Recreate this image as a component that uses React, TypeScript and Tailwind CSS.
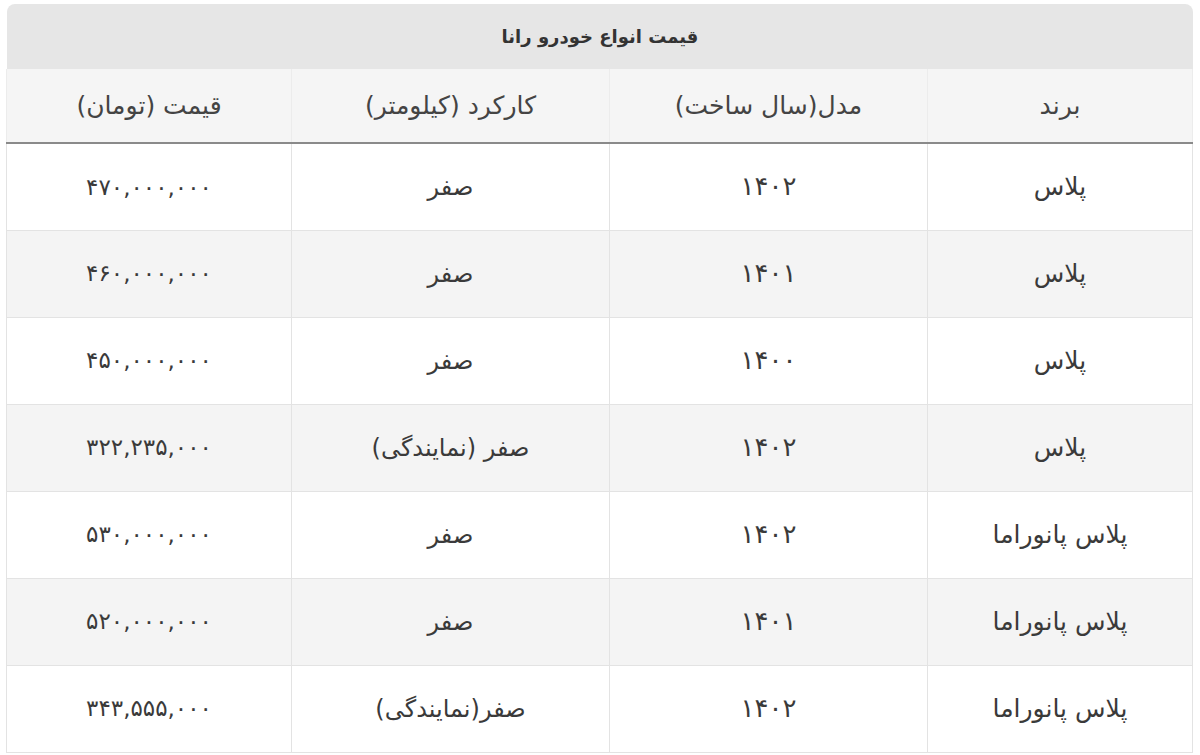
import React from "react";

const rows = [
  ["پلاس", "۱۴۰۲", "صفر", "۴۷۰,۰۰۰,۰۰۰"],
  ["پلاس", "۱۴۰۱", "صفر", "۴۶۰,۰۰۰,۰۰۰"],
  ["پلاس", "۱۴۰۰", "صفر", "۴۵۰,۰۰۰,۰۰۰"],
  ["پلاس", "۱۴۰۲", "صفر (نمایندگی)", "۳۲۲,۲۳۵,۰۰۰"],
  ["پلاس پانوراما", "۱۴۰۲", "صفر", "۵۳۰,۰۰۰,۰۰۰"],
  ["پلاس پانوراما", "۱۴۰۱", "صفر", "۵۲۰,۰۰۰,۰۰۰"],
  ["پلاس پانوراما", "۱۴۰۲", "صفر(نمایندگی)", "۳۴۳,۵۵۵,۰۰۰"],
];

const sizes = ["text-[25px]", "text-[26px]", "text-[24px]", "text-[23px]"];

export default function App() {
  return (
    <div
      className="w-[1200px] h-[755px] bg-white overflow-hidden pt-[4px] px-[7px]"
      style={{ fontFamily: '"DejaVu Sans", "Noto Sans", sans-serif' }}
      dir="rtl"
    >
      <div className="w-[1186px] rounded-t-[8px] bg-[#e6e6e6] h-[65px] flex items-center justify-center text-[18px] font-bold text-[#333]">
        قیمت انواع خودرو رانا
      </div>
      <table className="w-[1186px] border-collapse table-fixed text-[#3a3a3a]">
        <colgroup>
          <col className="w-[265px]" />
          <col className="w-[318px]" />
          <col className="w-[318px]" />
          <col className="w-[285px]" />
        </colgroup>
        <thead>
          <tr className="h-[74px] bg-[#f5f5f5]">
            {["برند", "مدل(سال ساخت)", "کارکرد (کیلومتر)", "قیمت (تومان)"].map((h) => (
              <th
                key={h}
                className="font-normal text-[25px] text-center border-b-2 border-b-[#8a8a8a] border-x border-x-[#ececec] text-[#444]"
              >
                {h}
              </th>
            ))}
          </tr>
        </thead>
        <tbody>
          {rows.map((r, i) => (
            <tr key={i} className={`h-[87px] ${i % 2 === 1 ? "bg-[#f4f4f4]" : "bg-white"}`}>
              {r.map((c, j) => (
                <td key={j} className={`text-center border border-[#e3e3e3] ${sizes[j]}`}>
                  {c}
                </td>
              ))}
            </tr>
          ))}
        </tbody>
      </table>
    </div>
  );
}
